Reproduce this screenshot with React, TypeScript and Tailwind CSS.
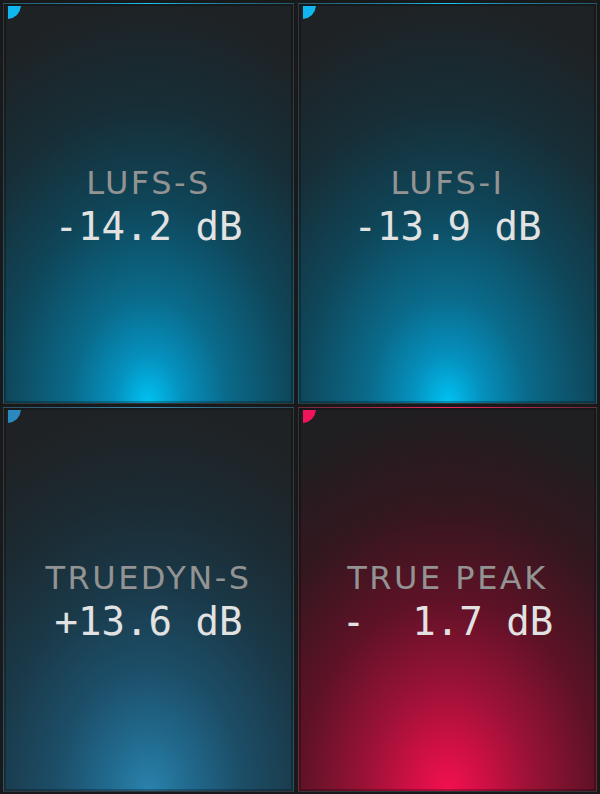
const meters = [
  {
    label: "LUFS-S",
    value: "-14.2 dB",
    corner: "#10b6f0",
    bg: "bg-[radial-gradient(ellipse_100%_100%_at_50%_100%,#00c2f2_0%,#0590bd_12%,#0a6a8a_27%,#0f4659_50%,#172e37_74%,#1e2225_100%)]",
  },
  {
    label: "LUFS-I",
    value: "-13.9 dB",
    corner: "#10b6f0",
    bg: "bg-[radial-gradient(ellipse_100%_100%_at_50%_100%,#00c2f2_0%,#0590bd_12%,#0a6a8a_27%,#0f4659_50%,#172e37_74%,#1e2225_100%)]",
  },
  {
    label: "TRUEDYN-S",
    value: "+13.6 dB",
    corner: "#2a8ac0",
    bg: "bg-[radial-gradient(ellipse_100%_100%_at_50%_100%,#2a82ad_0%,#216a8e_14%,#1c4e68_32%,#1a3847_55%,#1c2a31_78%,#1f2225_100%)]",
  },
  {
    label: "TRUE PEAK",
    value: "-  1.7 dB",
    corner: "#f0145a",
    bg: "bg-[radial-gradient(ellipse_100%_100%_at_50%_100%,#f2104f_0%,#d01045_12%,#9a1236_28%,#5e1226_50%,#34171f_74%,#1f1e20_100%)]",
  },
];

function Corner({ color }: { color: string }) {
  return (
    <svg width="14" height="14" viewBox="0 0 14 14" className="absolute top-[2px] left-[4px]">
      <path d="M0 0H13Q11.5 11.5 0 13Z" fill={color} />
    </svg>
  );
}

function Meter({ m, top }: { m: (typeof meters)[number]; top: boolean }) {
  return (
    <div
      className={`relative flex flex-col items-center justify-center border border-white/10 shadow-[inset_0_0_0_2px_rgba(0,0,0,0.25)] ${m.bg} ${
        top ? "pt-[6px]" : "pt-[4px]"
      }`}
    >
      <Corner color={m.corner} />
      <div className="text-[32px] leading-[38px] tracking-[2.5px] text-[#939393] font-['DejaVu_Sans',sans-serif]">
        {m.label}
      </div>
      <div className="mt-[3px] whitespace-pre text-[39px] leading-[44px] text-[#e2e2e2] font-['DejaVu_Sans_Mono',monospace]">
        {m.value}
      </div>
    </div>
  );
}

export default function App() {
  return (
    <div className="w-[600px] h-[794px] bg-[#18191b] pt-[3px] pl-[3px] grid grid-cols-[291px_299px] grid-rows-[401px_385px] gap-x-[4px] gap-y-[3px]">
      {meters.map((m, i) => (
        <Meter key={m.label} m={m} top={i < 2} />
      ))}
    </div>
  );
}
